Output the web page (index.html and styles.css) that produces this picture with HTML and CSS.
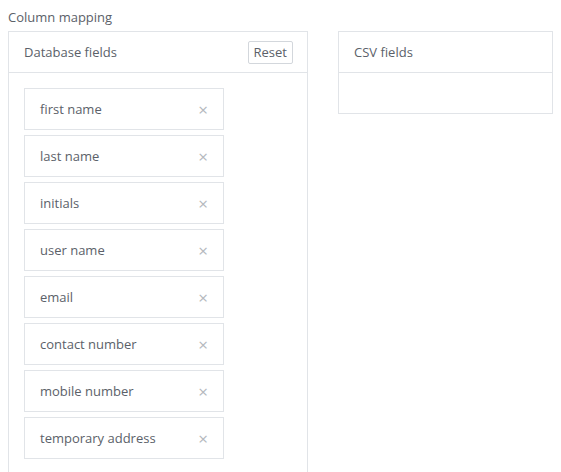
FILE: index.html
```html
<!DOCTYPE html>
<html>
<head>
<meta charset="utf-8">
<link rel="stylesheet" href="styles.css">
</head>
<body>
<div class="title">Column mapping</div>
<div class="columns">
  <div class="panel panel-db">
    <div class="panel-head">
      <span>Database fields</span>
      <button class="reset">Reset</button>
    </div>
    <div class="panel-body">
      <div class="item"><span>first name</span><span class="x">×</span></div>
      <div class="item"><span>last name</span><span class="x">×</span></div>
      <div class="item"><span>initials</span><span class="x">×</span></div>
      <div class="item"><span>user name</span><span class="x">×</span></div>
      <div class="item"><span>email</span><span class="x">×</span></div>
      <div class="item"><span>contact number</span><span class="x">×</span></div>
      <div class="item"><span>mobile number</span><span class="x">×</span></div>
      <div class="item"><span>temporary address</span><span class="x">×</span></div>
    </div>
  </div>
  <div class="panel panel-csv">
    <div class="panel-head"><span>CSV fields</span></div>
    <div class="panel-body empty"></div>
  </div>
</div>
</body>
</html>
```
FILE: styles.css
```css
html, body { margin: 0; padding: 0; background: #fff; }
body {
  padding: 8px;
  font-family: "Open Sans", "Liberation Sans", sans-serif;
  font-size: 13px;
  color: #5b6169;
  overflow: hidden;
  height: 472px;
  box-sizing: border-box;
}
.title {
  line-height: 18px;
  height: 23px;
}
.columns {
  display: flex;
  align-items: flex-start;
  gap: 30px;
}
.panel {
  border: 1px solid #e1e4e8;
  background: #fff;
  box-sizing: border-box;
}
.panel-db { width: 300px; }
.panel-csv { width: 215px; }
.panel-head {
  height: 40px;
  border-bottom: 1px solid #e1e4e8;
  display: flex;
  align-items: center;
  justify-content: space-between;
  padding: 0 15px;
}
.reset {
  font-family: inherit;
  font-size: 13px;
  color: #5b6169;
  background: #fff;
  border: 1px solid #d3d7dc;
  border-radius: 2px;
  height: 23px;
  padding: 0 5px;
  margin-right: -1px;
}
.panel-body {
  padding: 15px;
  display: flex;
  flex-direction: column;
  gap: 5px;
}
.panel-body.empty { height: 40px; padding: 0; }
.item {
  width: 200px;
  height: 42px;
  box-sizing: border-box;
  border: 1px solid #e1e4e8;
  display: flex;
  align-items: center;
  justify-content: space-between;
  padding: 0 15px;
}
.x {
  color: #b4b8bd;
  font-size: 17px;
  line-height: 1;
}
```
